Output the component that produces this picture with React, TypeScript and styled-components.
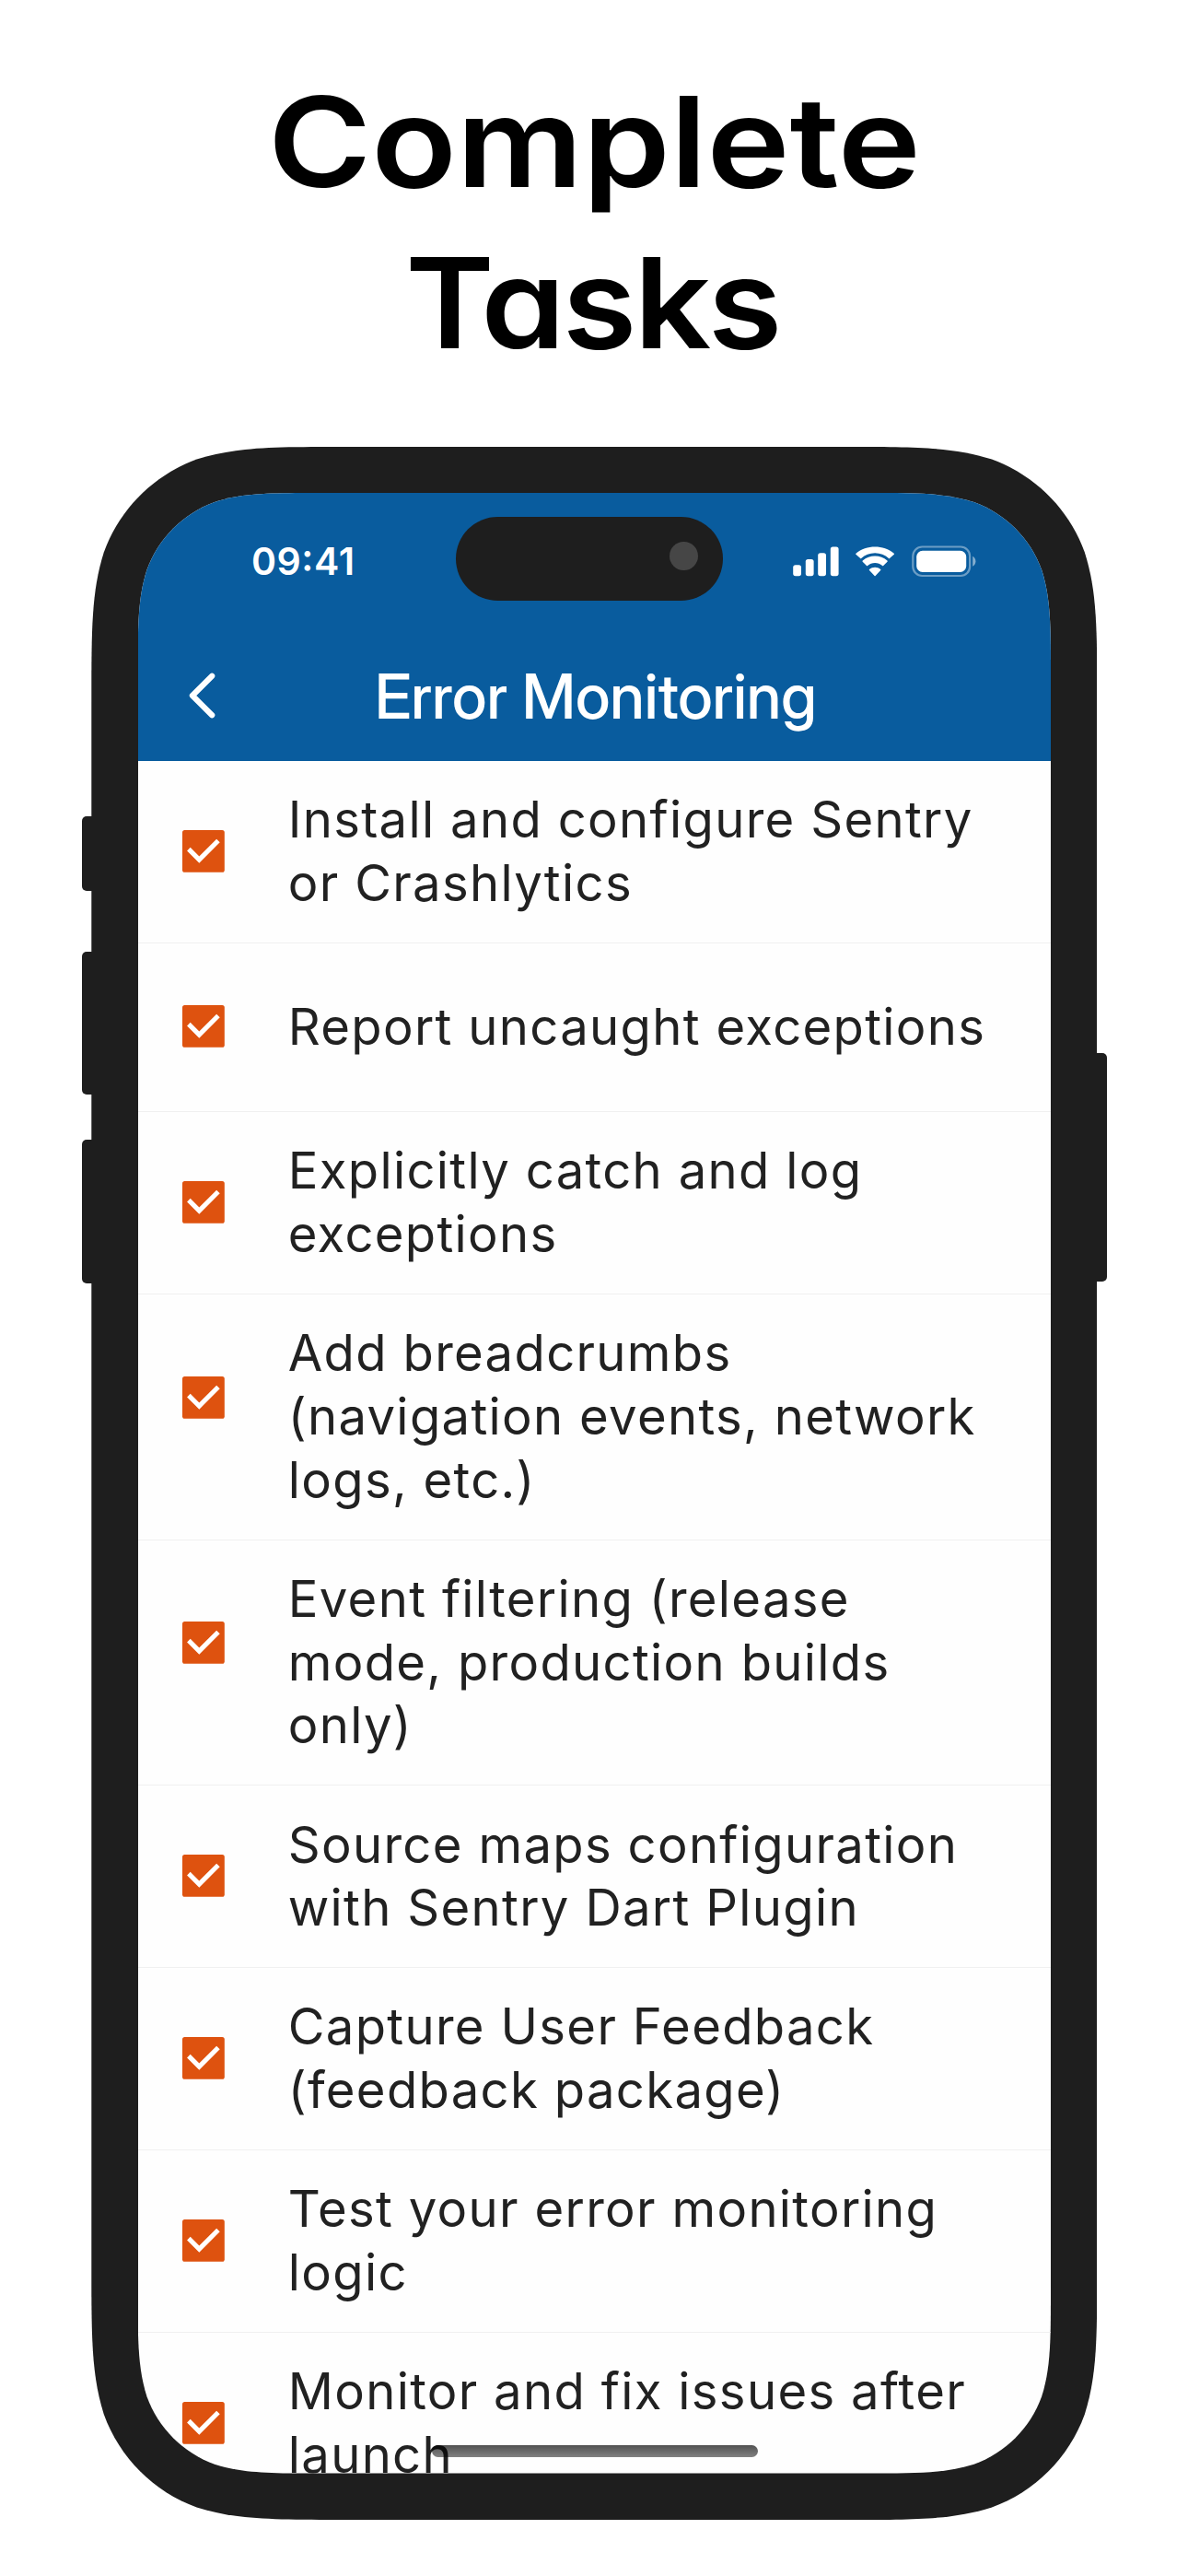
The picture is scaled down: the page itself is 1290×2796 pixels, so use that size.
import React from "react";
import styled, { createGlobalStyle } from "styled-components";

const FRAME = { width: 1092, height: 2250, radius: 181 };
const SCREEN = { width: 991.4, height: 2149.5, radius: 132 };

/* Rounded rectangle with continuous-curvature corners. */
function squircle({ width: w, height: h, radius: r }: { width: number; height: number; radius: number }) {
  const a = 1.52866 * r, b = 1.08849 * r, c = 0.86841 * r;
  const d = 0.63149 * r, e = 0.07491 * r, f = 0.37282 * r, g = 0.16906 * r;
  const n = (...v: number[]) => v.map((x) => x.toFixed(2)).join(" ");
  return [
    `M${n(a, 0)}L${n(w - a, 0)}`,
    `C${n(w - b, 0, w - c, 0, w - d, e)}C${n(w - f, g, w - g, f, w - e, d)}C${n(w, c, w, b, w, a)}`,
    `L${n(w, h - a)}`,
    `C${n(w, h - b, w, h - c, w - e, h - d)}C${n(w - g, h - f, w - f, h - g, w - d, h - e)}C${n(w - c, h, w - b, h, w - a, h)}`,
    `L${n(a, h)}`,
    `C${n(b, h, c, h, d, h - e)}C${n(f, h - g, g, h - f, e, h - d)}C${n(0, h - c, 0, h - b, 0, h - a)}`,
    `L${n(0, a)}`,
    `C${n(0, b, 0, c, e, d)}C${n(g, f, f, g, d, e)}C${n(c, 0, b, 0, a, 0)}Z`,
  ].join("");
}

const GlobalStyle = createGlobalStyle`
  * { box-sizing: border-box; }
  body {
    margin: 0;
    background: #fff;
    font-family: Inter, Roboto, sans-serif;
    -webkit-font-smoothing: antialiased;
  }
`;

const Page = styled.main`
  width: 1290px;
  height: 2796px;
  overflow: hidden;
  display: flex;
  flex-direction: column;
  background: #fff;
`;

const Headline = styled.h1`
  height: 485px;
  margin: 0;
  padding-top: 67.2px;
  display: flex;
  flex-direction: column;
  align-items: center;
  font-size: 136px;
  font-weight: 600;
  line-height: 174.7px;
  font-feature-settings: "cv11";
  color: #000;
`;

const HeadlineLine = styled.span<{ $tracking: number; $stretch: number }>`
  letter-spacing: ${(p) => p.$tracking}px;
  margin-right: ${(p) => -p.$tracking}px;
  transform: scaleX(${(p) => p.$stretch});
`;

const Phone = styled.section`
  position: relative;
  width: ${FRAME.width}px;
  height: ${FRAME.height}px;
  margin-left: 99.3px;
`;

const SideButton = styled.i<{ $side: "left" | "right"; $top: number; $height: number }>`
  position: absolute;
  ${(p) => p.$side}: -10.4px;
  top: ${(p) => p.$top}px;
  width: 24px;
  height: ${(p) => p.$height}px;
  border-radius: 5px;
  background: #1e1e1e;
`;

const Frame = styled.div`
  position: relative;
  width: 100%;
  height: 100%;
  padding: 50.1px 50.3px;
  background: #1e1e1e;
  clip-path: path("${squircle(FRAME)}");
`;

const Screen = styled.div`
  position: relative;
  width: ${SCREEN.width}px;
  height: ${SCREEN.height}px;
  background: #fefefe;
  overflow: hidden;
  clip-path: path("${squircle(SCREEN)}");
`;

const AppHeader = styled.header`
  height: 290.7px;
  background: #095c9e;
  color: #fff;
`;

const StatusBar = styled.div`
  height: 148.8px;
  padding: 0 81.5px 0 123.3px;
  display: flex;
  align-items: center;
  justify-content: space-between;
`;

const Clock = styled.time`
  font-size: 41px;
  font-weight: 600;
  line-height: 50px;
  letter-spacing: 0.6px;
  font-feature-settings: "case";
`;

const StatusIcons = styled.svg`
  display: block;
  width: 198px;
  height: 34px;
  overflow: visible;
`;

const Island = styled.div`
  position: absolute;
  left: 345.5px;
  top: 25.5px;
  width: 290.2px;
  height: 91px;
  padding: 27.5px 27.6px;
  display: flex;
  justify-content: flex-end;
  border-radius: 46px;
  background: #1e1e1e;
`;

const Camera = styled.i`
  width: 30.8px;
  height: 30.8px;
  border-radius: 50%;
  background: #464646;
`;

const NavBar = styled.div`
  height: 141.9px;
  display: grid;
  grid-template-columns: 1fr auto 1fr;
  align-items: center;
`;

const BackButton = styled.button`
  justify-self: start;
  margin: 0 0 0 55.6px;
  padding: 0;
  border: 0;
  background: none;
  color: inherit;
  line-height: 0;
`;

const NavTitle = styled.h2`
  margin: 0;
  padding: 2.8px 0 0 3px;
  font-family: "Inter Display", Inter, sans-serif;
  font-size: 67px;
  font-weight: 500;
  line-height: 80px;
  letter-spacing: -0.14px;
`;

const TaskList = styled.ul`
  margin: 0;
  padding: 0;
  list-style: none;
`;

const TaskRow = styled.li`
  min-height: 183.2px;
  padding: 29.2px 0 30.4px 48.2px;
  display: flex;
  align-items: center;
  gap: 69.2px;
  border-bottom: 1px solid #f0f0f0;
`;

/* Three-line rows carry their checkbox above the middle. */
const CheckBox = styled.svg<{ $raised: boolean }>`
  flex: none;
  width: 45.8px;
  height: 45.8px;
  margin-bottom: ${(p) => (p.$raised ? 41 : 0)}px;
`;

const TaskText = styled.span`
  white-space: pre;
  font-size: 54.4px;
  line-height: 68.7px;
  letter-spacing: 1.33px;
  color: #212121;
`;

const HomeIndicator = styled.div`
  position: absolute;
  left: 319px;
  top: 2118.7px;
  width: 354.3px;
  height: 12.8px;
  border-radius: 7px;
  background: linear-gradient(rgba(0, 0, 0, 0.68), rgba(0, 0, 0, 0.49));
`;

const tasks = [
  "Install and configure Sentry\nor Crashlytics",
  "Report uncaught exceptions",
  "Explicitly catch and log\nexceptions",
  "Add breadcrumbs\n(navigation events, network\nlogs, etc.)",
  "Event filtering (release\nmode, production builds\nonly)",
  "Source maps configuration\nwith Sentry Dart Plugin",
  "Capture User Feedback\n(feedback package)",
  "Test your error monitoring\nlogic",
  "Monitor and fix issues after\nlaunch",
];

const Checked = ({ raised }: { raised: boolean }) => (
  <CheckBox $raised={raised} viewBox="0 0 18 18" role="img" aria-label="Completed">
    <rect width="18" height="18" rx="1" fill="#de520f" />
    <path d="M2.7 8.1 7.2 12.6 15.3 4.5" fill="none" stroke="#fff" strokeWidth="2" />
  </CheckBox>
);

const Indicators = () => (
  <StatusIcons viewBox="0 0 198 34" fill="#fff">
    <rect x="0.2" y="21.2" width="8.8" height="12" rx="2.6" />
    <rect x="13.8" y="15" width="8.8" height="18.2" rx="2.6" />
    <rect x="27.2" y="8.2" width="8.8" height="25" rx="2.6" />
    <rect x="40.8" y="1.5" width="8.8" height="31.7" rx="2.6" />
    <g transform="translate(89.1 0)">
      <path
        d="M0 7.6c5.7 0 11 2.3 14.9 6 .3.3.7.3 1 0l4.8-4.4c.4-.4.4-.9 0-1.3C9.2-2.4-9.2-2.4-20.7 7.9c-.4.4-.4.9 0 1.3l4.8 4.4c.3.3.7.3 1 0C-11 9.9-5.7 7.6 0 7.6Z"
        transform="translate(0 1.3) scale(1 .93)"
      />
      <path
        d="M0 18.5c3 0 5.8 1.1 8 3.1.3.3.8.3 1.1 0l4.3-4.3c.4-.4.4-.9 0-1.3-7.6-6.6-19.2-6.6-26.8 0-.4.4-.4.9 0 1.3l4.3 4.3c.3.3.8.3 1.1 0 2.2-2 5-3.1 8-3.1Z"
        transform="translate(0 .5)"
      />
      <path
        d="M6.1 26.2c.4-.4.4-.9 0-1.2-3.5-2.9-8.700-2.900-12.200 0-.4.3-.4.800 0 1.200l5.600 5.900c.3.300.7.300 1 0Z"
        transform="translate(0 .9)"
      />
    </g>
    <rect x="130.3" y="1.5" width="61.8" height="31.5" rx="10" fill="none" stroke="#fff" strokeOpacity=".4" strokeWidth="2.2" />
    <rect x="134.2" y="5.7" width="54" height="23.2" rx="6.6" />
    <path d="M195.2 11.8v11c2-.9 3.2-3 3.2-5.5s-1.2-4.6-3.2-5.5Z" fillOpacity=".5" />
  </StatusIcons>
);

export default function App() {
  return (
    <Page>
      <GlobalStyle />
      <Headline>
        <HeadlineLine $tracking={-0.1} $stretch={1.12}>Complete</HeadlineLine>
        <HeadlineLine $tracking={-2.9} $stretch={1.08}>Tasks</HeadlineLine>
      </Headline>
      <Phone>
        <SideButton $side="left" $top={401.3} $height={80.7} />
        <SideButton $side="left" $top={547.5} $height={155.7} />
        <SideButton $side="left" $top={751.7} $height={156} />
        <SideButton $side="right" $top={658.2} $height={247.5} />
        <Frame>
          <Screen>
            <AppHeader>
              <StatusBar>
                <Clock>09:41</Clock>
                <Indicators />
              </StatusBar>
              <NavBar>
                <BackButton aria-label="Back">
                  <svg width="29" height="50" viewBox="0 0 29 50">
                    <path d="M25.2 3.7 3.9 25l21.3 21.3" fill="none" stroke="#fff" strokeWidth="6.2" strokeLinecap="round" strokeLinejoin="round" />
                  </svg>
                </BackButton>
                <NavTitle>Error Monitoring</NavTitle>
              </NavBar>
            </AppHeader>
            <TaskList>
              {tasks.map((task) => (
                <TaskRow key={task}>
                  <Checked raised={task.split("\n").length > 2} />
                  <TaskText>{task}</TaskText>
                </TaskRow>
              ))}
            </TaskList>
            <Island>
              <Camera />
            </Island>
            <HomeIndicator />
          </Screen>
        </Frame>
      </Phone>
    </Page>
  );
}
